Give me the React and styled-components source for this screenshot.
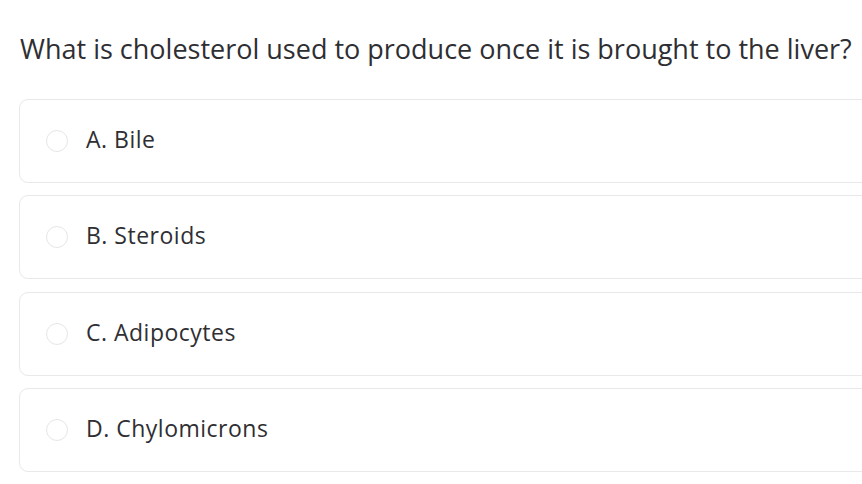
import React from "react";
import styled, { createGlobalStyle } from "styled-components";

const Global = createGlobalStyle`
  html, body { margin: 0; padding: 0; background: #fff; overflow: hidden; }
  body { font-family: "Open Sans", "Liberation Sans", sans-serif; color: #2f2f33; }
`;

const Page = styled.div`
  width: 900px;
  padding: 33px 0 0 20px;
  box-sizing: border-box;
`;

const Question = styled.h1`
  margin: 0 0 34px 0;
  font-size: 27px;
  font-weight: 400;
  line-height: 32px;
  color: #2f2f33;
`;

const Options = styled.div`
  display: flex;
  flex-direction: column;
  gap: 12.3px;
  margin-left: -1px;
`;

const Card = styled.label`
  display: flex;
  align-items: center;
  gap: 18px;
  height: 84px;
  padding: 0 0 4px 26px;
  box-sizing: border-box;
  border: 1px solid #e9e9eb;
  border-radius: 9px;
  cursor: pointer;
`;

const Radio = styled.span`
  width: 22px;
  height: 22px;
  border-radius: 50%;
  border: 1px solid #e6e6e8;
  box-sizing: border-box;
  flex: none;
  margin-top: 4px;
`;

const Label = styled.span`
  font-size: 23px;
  letter-spacing: 0.5px;
  color: #2f2f33;
`;

const options = ["A. Bile", "B. Steroids", "C. Adipocytes", "D. Chylomicrons"];

export default function App() {
  return (
    <>
      <Global />
      <Page>
        <Question>What is cholesterol used to produce once it is brought to the liver?</Question>
        <Options>
          {options.map((o) => (
            <Card key={o}>
              <Radio />
              <Label>{o}</Label>
            </Card>
          ))}
        </Options>
      </Page>
    </>
  );
}
